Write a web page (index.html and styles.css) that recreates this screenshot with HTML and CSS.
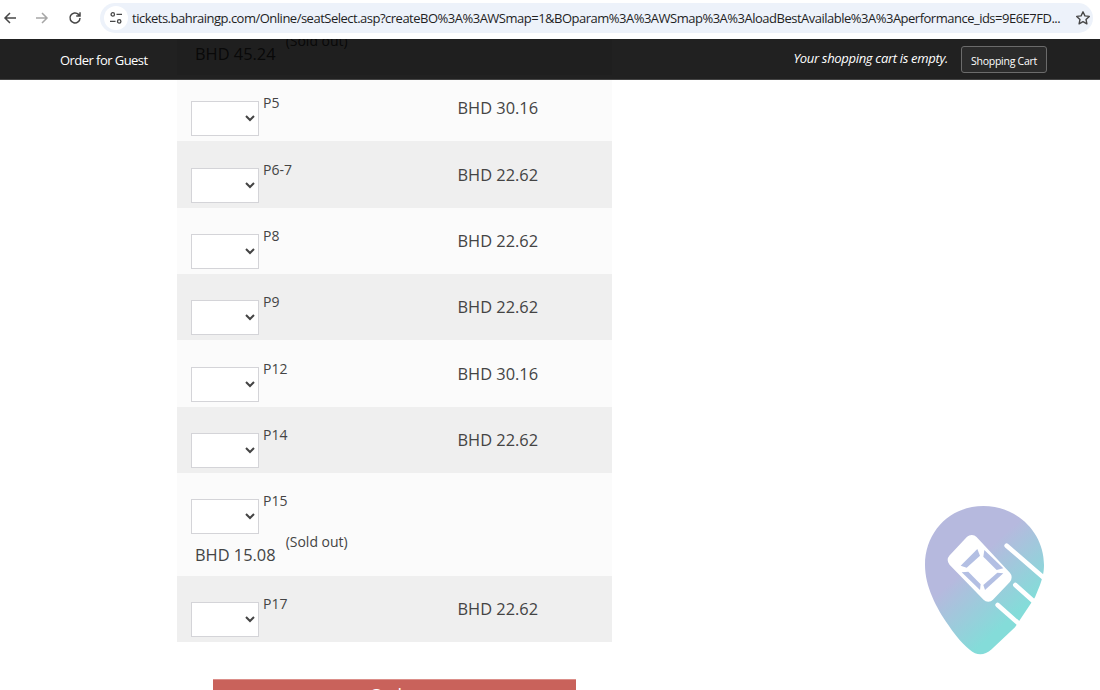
FILE: index.html
```html
<!DOCTYPE html>
<html lang="en">
<head>
<meta charset="utf-8">
<title>Seat select</title>
<link rel="stylesheet" href="styles.css">
</head>
<body>
<header class="chrome">
  <svg class="nav-icon" width="16" height="16" viewBox="0 0 16 16"><path d="M14 8H3M8 3L3 8l5 5" fill="none" stroke="#474747" stroke-width="1.5"/></svg>
  <svg class="nav-icon nav-fwd" width="16" height="16" viewBox="0 0 16 16"><path d="M2 8h11M8 3l5 5-5 5" fill="none" stroke="#a6a6a6" stroke-width="1.5"/></svg>
  <svg class="nav-icon nav-reload" width="16" height="16" viewBox="0 0 16 16"><path d="M13 8a5 5 0 1 1-1.5-3.6L13 6M13 2.2V6H9.2" fill="none" stroke="#474747" stroke-width="1.5"/></svg>
  <div class="omnibox">
    <span class="tune"><svg width="14" height="14" viewBox="0 0 14 14"><g fill="none" stroke="#474747" stroke-width="1.3"><circle cx="3.8" cy="3.4" r="1.7"/><path d="M7.5 3.4h5.5M1 10.4h5.5"/><circle cx="10.2" cy="10.4" r="1.7"/></g></svg></span>
    <span class="url">tickets.bahraingp.com/Online/seatSelect.asp?createBO%3A%3AWSmap=1&amp;BOparam%3A%3AWSmap%3A%3AloadBestAvailable%3A%3Aperformance_ids=9E6E7FD...</span>
    <svg class="star" width="16" height="16" viewBox="0 0 16 16"><path d="M8 1.8l1.9 4.1 4.4.5-3.3 3 .9 4.4L8 11.6l-3.9 2.2.9-4.4-3.3-3 4.4-.5z" fill="none" stroke="#474747" stroke-width="1.4" stroke-linejoin="round"/></svg>
  </div>
</header>

<main class="viewport">
  <nav class="topbar">
    <span class="guest">Order for Guest</span>
    <span class="cart-msg">Your shopping cart is empty.</span>
    <button class="cart-btn" type="button">Shopping Cart</button>
  </nav>

  <div class="seats">
    <div class="row-cut">
      <div class="sold"><span class="price">BHD 45.24</span><span class="sold-note">(Sold out)</span></div>
    </div>
    <div class="row odd"><div class="pick"><select class="qty"></select><span class="label">P5</span></div><span class="price">BHD 30.16</span></div>
    <div class="row even"><div class="pick"><select class="qty"></select><span class="label">P6-7</span></div><span class="price">BHD 22.62</span></div>
    <div class="row odd"><div class="pick"><select class="qty"></select><span class="label">P8</span></div><span class="price">BHD 22.62</span></div>
    <div class="row even"><div class="pick"><select class="qty"></select><span class="label">P9</span></div><span class="price">BHD 22.62</span></div>
    <div class="row odd"><div class="pick"><select class="qty"></select><span class="label">P12</span></div><span class="price">BHD 30.16</span></div>
    <div class="row even"><div class="pick"><select class="qty"></select><span class="label">P14</span></div><span class="price">BHD 22.62</span></div>
    <div class="row odd row-stack">
      <div class="pick"><select class="qty"></select><span class="label">P15</span></div>
      <div class="sold"><span class="price">BHD 15.08</span><span class="sold-note">(Sold out)</span></div>
    </div>
    <div class="row even"><div class="pick"><select class="qty"></select><span class="label">P17</span></div><span class="price">BHD 22.62</span></div>
  </div>

  <button class="submit" type="button">Order</button>

  <svg class="badge" width="170" height="180" viewBox="0 0 510 540">
    <defs>
      <linearGradient id="pinFill" gradientUnits="userSpaceOnUse" x1="170" y1="170" x2="350" y2="370">
        <stop offset="0.25" stop-color="#b6b9de"/>
        <stop offset="1" stop-color="#84dcd9"/>
      </linearGradient>
    </defs>
    <path d="M250 48C150 48 75 125 75 225C75 290 110 355 145 405C175 450 205 480 225 490C240 496 258 494 275 478L345 412L385 352L405 322L420 285C430 258 432 240 432 225C432 125 350 48 250 48Z" fill="url(#pinFill)"/>
    <g fill="none" stroke="#fff" stroke-width="14" stroke-linecap="round">
      <path d="M320 167L445 275"/>
      <path d="M346 285L430 360"/>
      <path d="M293 345L380 422"/>
    </g>
    <path d="M215 155L163 210L265 315L315 262Z" fill="#fff" stroke="#fff" stroke-width="40" stroke-linejoin="round"/>
    <g fill="#b3bfe3">
      <path d="M182 227L232 177L240 197L200 233Z"/>
      <path d="M253 180L310 235L290 240L250 200Z"/>
      <path d="M310 250L255 300L250 285L292 248Z"/>
      <path d="M185 247L240 300L242 283L205 245Z"/>
    </g>
  </svg>
</main>
</body>
</html>
```
FILE: styles.css
```css
* { box-sizing: border-box; }
html, body { margin: 0; height: 690px; overflow: hidden; background: #fff; }
body { font-family: "Open Sans", "Liberation Sans", sans-serif; color: #444; }

.chrome { height: 39px; display: flex; align-items: center; background: #fff; padding: 0 7px 4px 2px; }
.nav-icon { flex: none; }
.nav-fwd { margin-left: 16px; }
.nav-reload { margin-left: 17px; }
.omnibox { flex: 1; min-width: 0; height: 30px; margin-left: 17px; padding: 0 2px 0 4px; background: #edf2fa; border-radius: 15px; display: flex; align-items: center; }
.tune { width: 24px; height: 24px; border-radius: 50%; background: #fff; display: flex; align-items: center; justify-content: center; flex: none; }
.url { flex: 1; min-width: 0; margin-left: 4px; font-size: 13px; letter-spacing: -.5px; color: #1f1f1f; white-space: nowrap; overflow: hidden; }
.star { flex: none; margin-left: 14px; }

.viewport { position: relative; height: 651px; overflow: hidden; }
.topbar { position: absolute; top: 0; left: 0; right: 0; height: 41px; z-index: 2; background: rgba(0, 0, 0, .87); border-bottom: 1px solid #444; display: flex; align-items: center; padding: 0 53px 0 60px; color: #fff; }
.guest { font-size: 13px; letter-spacing: -.55px; margin-right: auto; position: relative; top: 1px; }
.cart-msg { font-size: 13px; font-style: italic; letter-spacing: -.32px; position: relative; top: -1px; }
.cart-btn { margin-left: 13px; width: 86px; height: 27px; padding: 3px 0 0; font: 10.5px "Open Sans", sans-serif; letter-spacing: -.25px; color: #fff; background: #2b2b2b; border: 1px solid #6b6b6b; border-radius: 3px; }

.seats { width: 435px; margin-left: 177px; }
.row { display: grid; grid-template-columns: 266.5px 1fr; padding-left: 14px; height: 66.35px; }
.odd { background: #fbfbfb; }
.even { background: #efefef; }
.row-cut { height: 36px; padding-left: 14px; background: #efefef; overflow: hidden; }
.row-stack { display: block; height: 103px; }
.pick { display: flex; align-items: flex-start; padding-top: 26.3px; }
.qty { width: 68px; height: 35px; background: #fff; border: 1px solid #d4d4d8; border-radius: 0; padding: 0; color: #444; }
.label { margin: -8px 0 0 4px; font-size: 14px; line-height: 19px; }
.row > .price { padding-top: 22.3px; }
.price { font-size: 16.4px; line-height: 22px; }
.sold { display: flex; align-items: flex-start; padding: 0 0 0 4px; }
.row-stack .sold { padding-top: 5.5px; }
.sold .price { margin-top: 4px; }
.sold-note { font-size: 14px; line-height: 19px; margin-left: 10px; margin-top: -8px; }

.submit { display: block; width: 363px; height: 40px; margin: 36.8px 0 0 213px; padding: 0 0 10px; background: #c9625b; color: #fff; border: 0; border-top: 1px solid #dc8f8a; font: 18px "Open Sans", sans-serif; }
.badge { position: absolute; left: 900px; top: 451px; }
```
